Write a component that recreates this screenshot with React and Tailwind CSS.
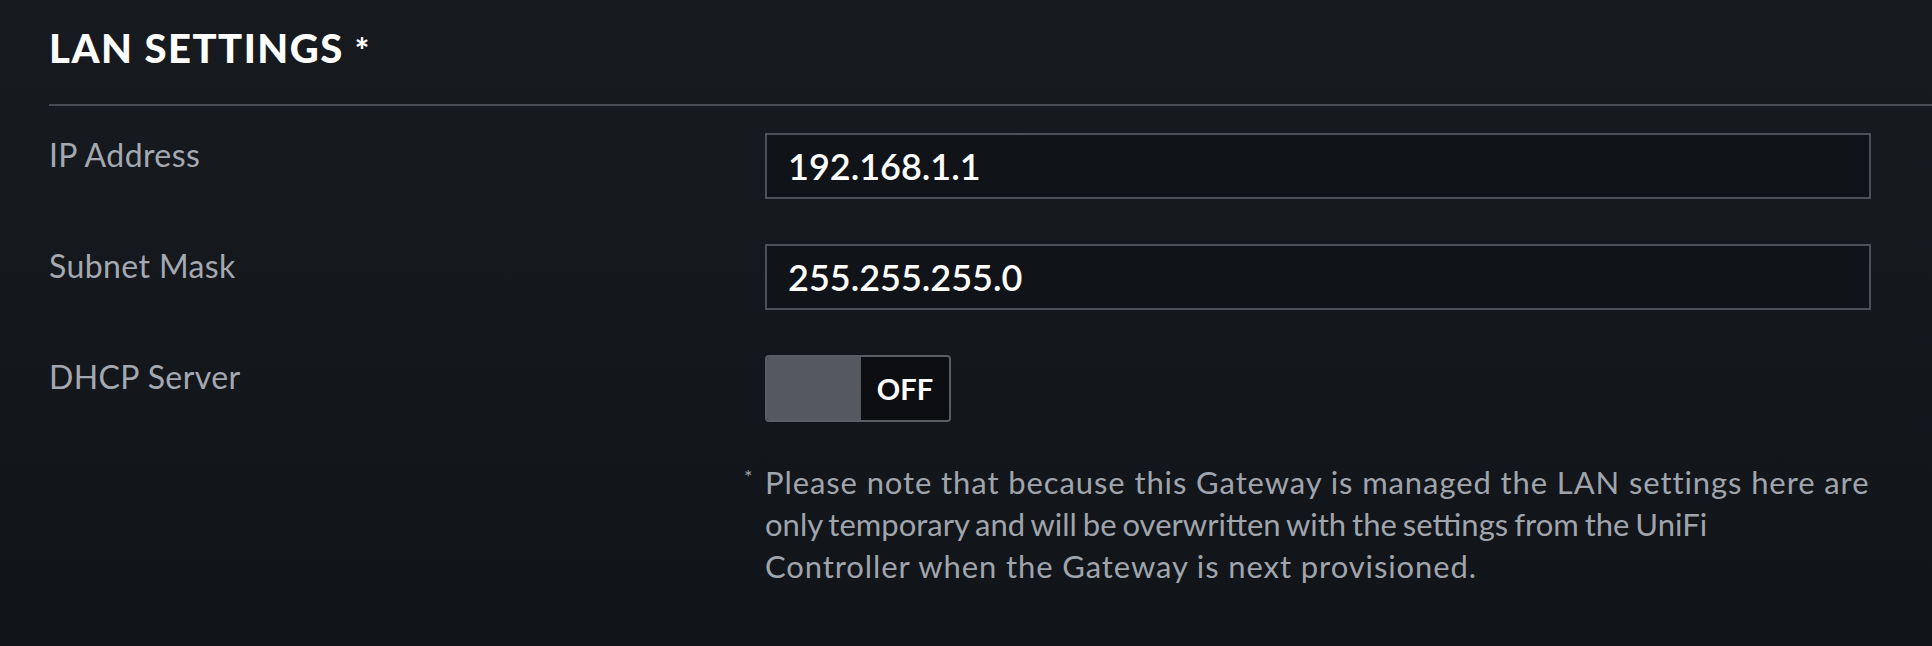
import React from "react";

const rows = [
  { label: "IP Address", value: "192.168.1.1" },
  { label: "Subnet Mask", value: "255.255.255.0" },
];

const App = () => {
  return (
    <div
      className="min-h-screen w-full bg-gradient-to-b from-[#171a1f] to-[#111419] pl-[49px] pt-[24px]"
      style={{ fontFamily: "Lato, 'Open Sans', sans-serif" }}
    >
      <div className="border-b-2 border-[#474c53] pb-[30px]">
        <h2 className="text-[40px] leading-[48px] font-black text-white tracking-[1.5px]">
          LAN SETTINGS <span className="text-[34px]">*</span>
        </h2>
      </div>

      <div className="mr-[61px] pt-[27px]">
        {rows.map((row) => (
          <div key={row.label} className="flex items-start mb-[45px]">
            <div className="w-[716px] shrink-0 pt-[2px] text-[32px] leading-[40px] tracking-[0.4px] text-[#a4a9b1]">
              {row.label}
            </div>
            <div className="flex-1 h-[66px] border-2 border-[#4b5057] bg-[#101318] flex items-center px-[21px]">
              <span className="text-[36px] font-semibold text-white">{row.value}</span>
            </div>
          </div>
        ))}

        <div className="flex items-start">
          <div className="w-[716px] shrink-0 pt-[2px] text-[32px] leading-[40px] tracking-[0.4px] text-[#a4a9b1]">
            DHCP Server
          </div>
          <div className="flex h-[67px] w-[186px] border-2 border-[#5a5e64] rounded-[4px] overflow-hidden">
            <div className="w-[94px] bg-[#55585f]" />
            <div className="flex-1 bg-[#0c0e11] flex items-center justify-center">
              <span className="text-[29px] font-bold text-white">OFF</span>
            </div>
          </div>
        </div>

        <div className="flex mt-[39px]">
          <div className="w-[716px] shrink-0" />
          <div className="relative text-[31px] leading-[42px] tracking-[0.9px] text-[#a0a5ad] whitespace-nowrap">
            <span className="absolute -left-[21px] top-[-6px] text-[20px]">*</span>
            Please note that because this Gateway is managed the LAN settings here are
            <br />
            <span className="tracking-[0px] [word-spacing:-2px]">
              only temporary and will be overwritten with the settings from the UniFi
            </span>
            <br />
            Controller when the Gateway is next provisioned.
          </div>
        </div>
      </div>
    </div>
  );
};

export default App;
